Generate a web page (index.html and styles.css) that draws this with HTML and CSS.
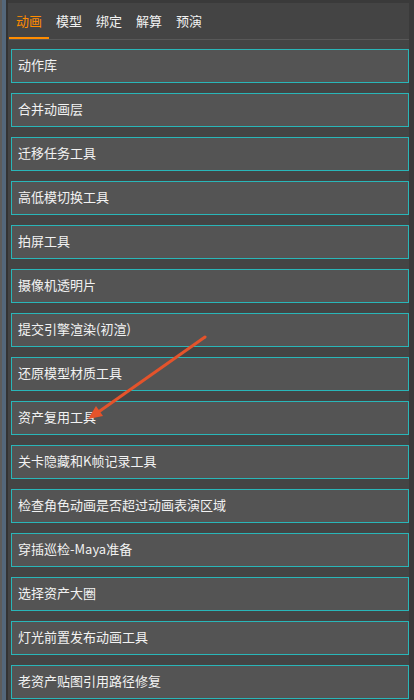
FILE: index.html
```html
<!DOCTYPE html>
<html lang="zh-CN">

<head>
    <meta charset="UTF-8">
    <meta name="viewport" content="width=device-width, initial-scale=1.0">
    <title>工具面板</title>
    <link rel="stylesheet" href="styles.css">
</head>

<body>
    <div class="side"></div>
    <div class="panel">
        <div class="tabs">
            <div class="tab active">动画</div>
            <div class="tab">模型</div>
            <div class="tab">绑定</div>
            <div class="tab">解算</div>
            <div class="tab">预演</div>
        </div>
        <div class="list">
            <button class="tool">动作库</button>
            <button class="tool">合并动画层</button>
            <button class="tool">迁移任务工具</button>
            <button class="tool">高低模切换工具</button>
            <button class="tool">拍屏工具</button>
            <button class="tool">摄像机透明片</button>
            <button class="tool">提交引擎渲染(初渲)</button>
            <button class="tool">还原模型材质工具</button>
            <button class="tool">资产复用工具</button>
            <button class="tool">关卡隐藏和K帧记录工具</button>
            <button class="tool">检查角色动画是否超过动画表演区域</button>
            <button class="tool">穿插巡检-Maya准备</button>
            <button class="tool">选择资产大圈</button>
            <button class="tool">灯光前置发布动画工具</button>
            <button class="tool">老资产贴图引用路径修复</button>
        </div>
        <!-- annotation arrow drawn over the list -->
        <svg class="arrow" width="130" height="95" viewBox="0 0 130 95">
            <line x1="125" y1="4" x2="17" y2="80" stroke="#e4532b" stroke-width="3" stroke-linecap="round" />
            <polygon points="8,86 16,73 23,83" fill="#e4532b" />
        </svg>
    </div>
    <div class="scroll"></div>
</body>

</html>
```

FILE: styles.css
```css
* {
    box-sizing: border-box;
    padding: 0;
    margin: 0;
}

body {
    display: flex;
    height: 700px;
    overflow: hidden;
    background-color: #333;
    font-family: "Noto Sans CJK SC", "Noto Sans", sans-serif;
    font-size: 13px;
    color: #f2f2f2;
}

.side {
    width: 8px;
    background: linear-gradient(to right, #5c5c5c 0 2px, #54677a 2px 6px, #333 6px 8px);
}

.panel {
    position: relative;
    width: 401px;
    background-color: #444;
    border-top: 3px solid #3a3a3a;
}

.tabs {
    display: flex;
    margin-left: 1px;
    border-bottom: 1px solid #585858;
}

.tab {
    width: 40px;
    height: 36px;
    padding-top: 3px;
    line-height: 30px;
    text-align: center;
    border-bottom: 2px solid transparent;
}

.tab.active {
    color: #ff8c00;
    border-bottom-color: #ff8c00;
}

.list {
    display: flex;
    flex-direction: column;
    gap: 10px;
    padding: 9px 0 0 3px;
}

.tool {
    height: 34px;
    padding: 0 0 3px 6px;
    text-align: left;
    font: inherit;
    color: inherit;
    background-color: #545454;
    border: 1px solid #29b6b8;
}

.arrow {
    position: absolute;
    left: 72px;
    top: 330px;
}

.scroll {
    width: 5px;
    background-color: #3a3a3a;
}
```
